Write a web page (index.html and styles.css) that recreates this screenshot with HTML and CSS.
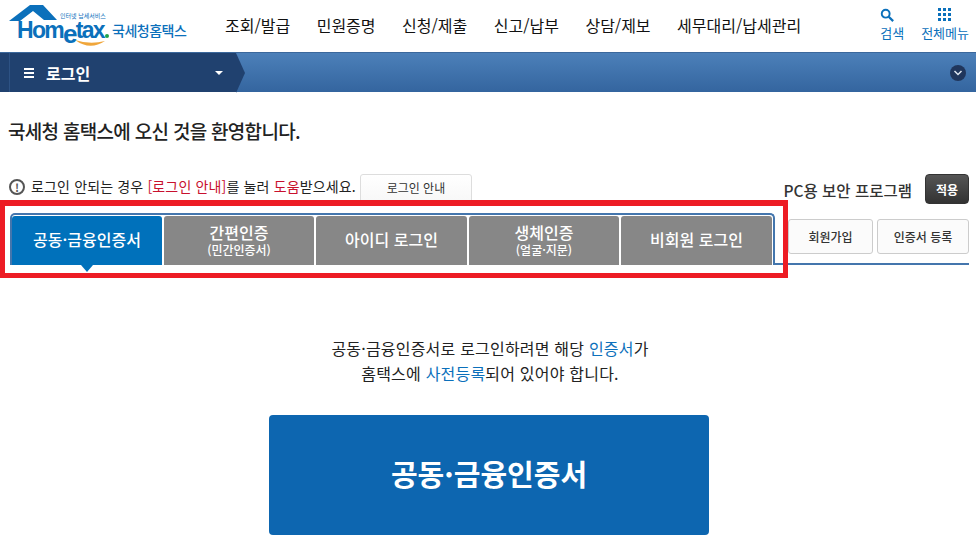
FILE: index.html
```html
<!DOCTYPE html>
<html lang="ko">
<head>
    <meta charset="UTF-8">
    <title>국세청 홈택스 로그인</title>
    <link rel="stylesheet" href="styles.css">
</head>
<body>
<!-- Top header -->
<header class="top-header">
    <a class="logo">
        <svg class="logo-mark" width="116" height="48" viewBox="0 0 116 48">
            <path d="M9 21 L30 5 L43 5 L57 20 L44 20 L33 11 L20 21 Z" fill="#0b70bb"/>
            <path d="M75 40 Q90 51 105 41 Q90 45 75 40 Z" fill="#f0a63a"/>
            <circle cx="107" cy="36" r="2" fill="#1fa34a"/>
        </svg>
        <span class="logo-small">인터넷 납세서비스</span>
        <span class="logo-word">Hom<span class="logo-e">e</span>tax</span>
        <span class="logo-name">국세청홈택스</span>
    </a>
    <nav class="main-nav">
        <a>조회/발급</a>
        <a>민원증명</a>
        <a>신청/제출</a>
        <a>신고/납부</a>
        <a>상담/제보</a>
        <a>세무대리/납세관리</a>
    </nav>
    <div class="top-tools">
        <a class="tool">
            <svg class="search-icon" width="14" height="14" viewBox="0 0 16 16">
                <circle cx="6.5" cy="6.5" r="4.5" fill="none" stroke="#0b70bb" stroke-width="2.2"/>
                <path d="M10 10 L15 15" stroke="#0b70bb" stroke-width="2.6"/>
            </svg>
            <span>검색</span>
        </a>
        <a class="tool">
            <svg width="14" height="14" viewBox="0 0 14 14" fill="#0b70bb">
                <rect x="0" y="0" width="3" height="3"/><rect x="5" y="0" width="3" height="3"/><rect x="10" y="0" width="3" height="3"/>
                <rect x="0" y="5" width="3" height="3"/><rect x="5" y="5" width="3" height="3"/><rect x="10" y="5" width="3" height="3"/>
                <rect x="0" y="10" width="3" height="3"/><rect x="5" y="10" width="3" height="3"/><rect x="10" y="10" width="3" height="3"/>
            </svg>
            <span>전체메뉴</span>
        </a>
    </div>
</header>

<!-- Blue location bar -->
<div class="loc-bar">
    <div class="loc-current">
        <span class="burger"><i></i><i></i><i></i></span>
        <span class="loc-title">로그인</span>
        <span class="loc-caret"></span>
    </div>
    <svg class="loc-arrow" width="10" height="40" viewBox="0 0 10 40">
        <path d="M0 0 L9 20 L0 40 Z" fill="#20416f"/>
    </svg>
    <span class="loc-more">
        <svg width="10" height="8" viewBox="0 0 10 8"><path d="M1.5 2 L5 5.5 L8.5 2" fill="none" stroke="#dfe6ef" stroke-width="1.5"/></svg>
    </span>
</div>

<main class="content">
    <h1 class="welcome">국세청 홈택스에 오신 것을 환영합니다.</h1>

    <div class="info-row">
        <div class="notice">
            <span class="notice-icon">!</span>
            <span class="notice-text">로그인 안되는 경우 <b class="red">[로그인 안내]</b>를 눌러 <b class="red">도움</b>받으세요.</span>
            <button class="btn-guide">로그인 안내</button>
        </div>
        <div class="security">
            <span>PC용 보안 프로그램</span>
            <button class="btn-apply">적용</button>
        </div>
    </div>

    <div class="tab-row">
        <div class="tabs-highlight">
            <div class="tabs">
                <a class="tab active">공동·금융인증서</a>
                <a class="tab two"><span>간편인증</span><small>(민간인증서)</small></a>
                <a class="tab id">아이디 로그인</a>
                <a class="tab two bio"><span>생체인증</span><small>(얼굴·지문)</small></a>
                <a class="tab guest">비회원 로그인</a>
            </div>
        </div>
        <div class="side-btns">
            <button class="btn-side">회원가입</button>
            <button class="btn-side wide">인증서 등록</button>
        </div>
    </div>

    <p class="cert-text">공동·금융인증서로 로그인하려면 해당 <b class="blue">인증서</b>가<br>홈택스에 <b class="blue">사전등록</b>되어 있어야 합니다.</p>
    <button class="btn-cert">공동·금융인증서</button>
</main>
</body>
</html>
```

FILE: styles.css
```css
/* General */
body {
    margin: 0;
    height: 549px;
    overflow: hidden;
    background: #fff;
    color: #222;
    font-family: "Noto Sans CJK KR", "Noto Sans", sans-serif;
}

button {
    font-family: inherit;
    cursor: pointer;
}

/* Top header */
.top-header {
    height: 52px;
    display: flex;
    align-items: flex-start;
}

.logo {
    position: relative;
    display: block;
    width: 225px;
    height: 52px;
    flex: none;
}

.logo-mark {
    position: absolute;
    left: 0;
    top: 0;
}

.logo-small {
    position: absolute;
    left: 60px;
    top: 11px;
    font-size: 6px;
    line-height: 9px;
    color: #0b70bb;
}

.logo-word {
    position: absolute;
    left: 17px;
    top: 14px;
    font-family: "Liberation Sans", sans-serif;
    font-size: 23px;
    line-height: 30px;
    font-weight: bold;
    letter-spacing: -1.7px;
    color: #0b70bb;
}

.logo-e {
    position: relative;
    top: 5px;
    font-size: 26px;
}

.logo-name {
    position: absolute;
    left: 112px;
    top: 20px;
    font-size: 14px;
    line-height: 20px;
    font-weight: 500;
    letter-spacing: -0.5px;
    color: #0b70bb;
}

.main-nav {
    display: flex;
    gap: 26.5px;
    height: 52px;
    align-items: center;
    padding-bottom: 2px;
    box-sizing: border-box;
    font-size: 16px;
    color: #111;
}

.top-tools {
    margin-left: auto;
    display: flex;
    gap: 17px;
    padding: 8px 7px 0 0;
}

.tool {
    display: flex;
    flex-direction: column;
    align-items: center;
    gap: 3px;
    font-size: 13px;
    line-height: 16px;
    color: #0b70bb;
}

.search-icon {
    margin-right: 10px;
}

/* Location bar */
.loc-bar {
    height: 40px;
    display: flex;
    align-items: center;
    background: linear-gradient(#4c80b9, #34659f);
    border-top: 1px solid #3b689c;
    box-sizing: border-box;
}

.loc-current {
    width: 236px;
    height: 100%;
    flex: none;
    display: flex;
    align-items: center;
    box-sizing: border-box;
    padding-left: 24px;
    background: linear-gradient(90deg, #20416f 9px, #2d5284 9px, #2d5284 10px, #20416f 10px);
    color: #fff;
}

.burger {
    width: 10px;
    display: flex;
    flex-direction: column;
    gap: 2px;
    margin-right: 12px;
}

.burger i {
    display: block;
    height: 2px;
    background: #fff;
}

.loc-title {
    font-size: 16px;
    font-weight: bold;
}

.loc-caret {
    margin-left: auto;
    margin-right: 13px;
    border-left: 4px solid transparent;
    border-right: 4px solid transparent;
    border-top: 4px solid #fff;
}

.loc-arrow {
    flex: none;
}

.loc-more {
    margin-left: auto;
    margin-right: 10px;
    width: 16px;
    height: 16px;
    border-radius: 50%;
    background: #20365c;
    display: flex;
    align-items: center;
    justify-content: center;
}

/* Main content */
.content {
    padding: 0 7px 0 8px;
}

.welcome {
    margin: 26px 0 0;
    font-size: 19px;
    line-height: 26px;
    font-weight: 500;
    letter-spacing: -0.7px;
    color: #222;
}

.info-row {
    display: flex;
    justify-content: space-between;
    margin-top: 30px;
    height: 26px;
}

.notice {
    display: flex;
    align-items: flex-start;
    font-size: 14px;
    line-height: 20px;
    letter-spacing: 0.15px;
    padding-left: 1px;
}

.notice-icon {
    flex: none;
    width: 12px;
    height: 12px;
    border: 2px solid #555;
    border-radius: 50%;
    margin: 5px 6px 0 0;
    font-size: 11px;
    line-height: 12px;
    font-weight: bold;
    text-align: center;
    color: #555;
}

.notice-text {
    padding-top: 2px;
}

.notice b {
    font-weight: normal;
}

.red {
    color: #c8102e;
}

.blue {
    color: #0b70bb;
}

.btn-guide {
    flex: none;
    width: 112px;
    height: 30px;
    margin-left: 4px;
    padding: 0 0 4px;
    font-size: 12px;
    color: #333;
    background: linear-gradient(#fff, #f7f7f7);
    border: 1px solid #ddd;
    border-radius: 3px;
}

.security {
    display: flex;
    align-items: flex-start;
    gap: 13px;
    font-size: 15.5px;
    font-weight: 500;
    color: #333;
}

.security span {
    margin-top: 6px;
    line-height: 20px;
}

.btn-apply {
    width: 44px;
    height: 30px;
    padding: 0;
    font-size: 12px;
    font-weight: bold;
    color: #fff;
    background: linear-gradient(#555, #333);
    border: 1px solid #333;
    border-radius: 4px;
}

/* Login tabs */
.tab-row {
    position: relative;
    display: flex;
    margin-left: -8px;
}

.tabs-highlight {
    position: relative;
    z-index: 1;
    width: 788px;
    height: 78px;
    flex: none;
    box-sizing: border-box;
    border: 5px solid #ed1c24;
    border-top-width: 6px;
    padding: 7px 0 0 5px;
}

.tabs {
    position: relative;
    display: flex;
    gap: 2px;
    width: 765px;
    height: 52px;
    box-sizing: border-box;
    padding-top: 1px;
    border: 2px solid #4476ad;
    border-bottom: 0;
    border-radius: 5px 5px 0 0;
}

/* blue rule continues inside the red box */
.tabs::after {
    content: "";
    position: absolute;
    left: 100%;
    margin-left: 2px;
    bottom: 0;
    width: 8px;
    height: 2px;
    background: #4476ad;
}

.tab {
    position: relative;
    flex: none;
    width: 150px;
    height: 49px;
    padding-bottom: 3px;
    box-sizing: border-box;
    display: flex;
    flex-direction: column;
    align-items: center;
    justify-content: center;
    background: #878787;
    border-radius: 3px 3px 0 0;
    color: #fff;
    font-size: 16px;
    line-height: 20px;
    font-weight: 500;
}

.tab.active {
    background: #0071bb;
}

.tab.active::after {
    content: "";
    position: absolute;
    left: 69px;
    top: 49px;
    border-left: 6px solid transparent;
    border-right: 6px solid transparent;
    border-top: 7px solid #0071bb;
}

.tab.id, .tab.guest {
    width: 151px;
}

.tab small {
    font-size: 12px;
    line-height: 15px;
}

.side-btns {
    flex: 1;
    height: 46px;
    margin: 19px 0 0 -5px;
    box-sizing: border-box;
    display: flex;
    gap: 4px;
    justify-content: flex-end;
    border-bottom: 2px solid #4476ad;
}

.btn-side {
    width: 85px;
    height: 35px;
    padding: 0;
    font-size: 12px;
    font-weight: 500;
    color: #333;
    background: #fbfbfb;
    border: 1px solid #ccc;
    border-radius: 3px;
}

.btn-side.wide {
    width: 92px;
}

/* Certificate login */
.cert-text {
    margin: 58px 0 0;
    text-align: center;
    font-size: 16px;
    line-height: 25px;
    letter-spacing: 0.2px;
    color: #222;
    padding-left: 3px;
}

.cert-text b {
    font-weight: 400;
}

.btn-cert {
    display: block;
    width: 440px;
    height: 120px;
    margin: 29px 0 0 261px;
    padding: 0 0 4px;
    border: 0;
    border-radius: 4px;
    background: #0d66b0;
    color: #fff;
    font-size: 29px;
    font-weight: bold;
}
```
